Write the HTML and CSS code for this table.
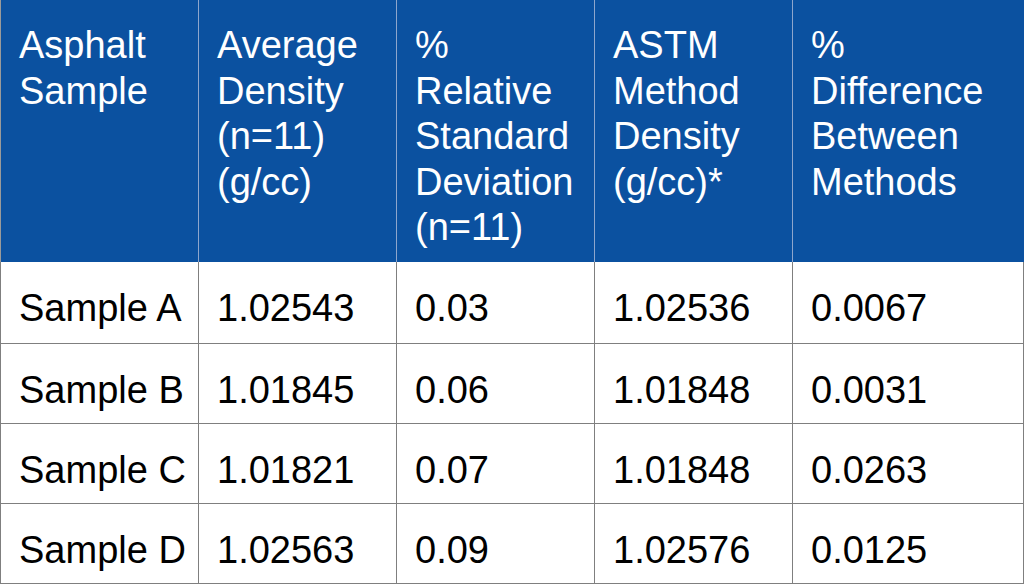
FILE: index.html
```html
<!DOCTYPE html>
<html lang="en">
<head>
    <meta charset="UTF-8">
    <title>Asphalt Density</title>
    <link rel="stylesheet" href="styles.css">
</head>
<body>
<table class="grid">
    <colgroup>
        <col class="c1"><col class="c2"><col class="c3"><col class="c4"><col class="c5">
    </colgroup>
    <thead>
        <tr>
            <th>Asphalt<br>Sample</th>
            <th>Average<br>Density<br>(n=11)<br>(g/cc)</th>
            <th>%<br>Relative<br>Standard<br>Deviation<br>(n=11)</th>
            <th>ASTM<br>Method<br>Density<br>(g/cc)*</th>
            <th>%<br>Difference<br>Between<br>Methods</th>
        </tr>
    </thead>
    <tbody>
        <tr><td>Sample A</td><td>1.02543</td><td>0.03</td><td>1.02536</td><td>0.0067</td></tr>
        <tr><td>Sample B</td><td>1.01845</td><td>0.06</td><td>1.01848</td><td>0.0031</td></tr>
        <tr><td>Sample C</td><td>1.01821</td><td>0.07</td><td>1.01848</td><td>0.0263</td></tr>
        <tr><td>Sample D</td><td>1.02563</td><td>0.09</td><td>1.02576</td><td>0.0125</td></tr>
    </tbody>
</table>
</body>
</html>
```
FILE: styles.css
```css
*{
    margin: 0;
    padding: 0;
    box-sizing: border-box;
}

body{
    background: #fff;
    font-family: "Liberation Sans", Arial, sans-serif;
}

.grid{
    width: 1023px;
    border-collapse: collapse;
    table-layout: fixed;
    font-size: 38px;
    line-height: 45.5px;
}
.grid .c1,.grid .c2,.grid .c3,.grid .c4{
    width: 198px;
}
.grid .c5{
    width: 231px;
}

.grid th{
    height: 262px;
    padding: 23px 8px 0 18px;
    vertical-align: top;
    text-align: left;
    font-weight: normal;
    color: #fff;
    background: #0b51a0;
    border-left: 1px solid #8ea6cc;
}
.grid th:first-child{
    border-left-color: #9a9a9a;
}

.grid td{
    height: 80px;
    padding: 24px 8px 0 18px;
    vertical-align: top;
    color: #000;
    border: 1px solid #7f7f7f;
    white-space: nowrap;
}
.grid tbody tr:first-child td{
    height: 81px;
    border-top: 0;
}
```
